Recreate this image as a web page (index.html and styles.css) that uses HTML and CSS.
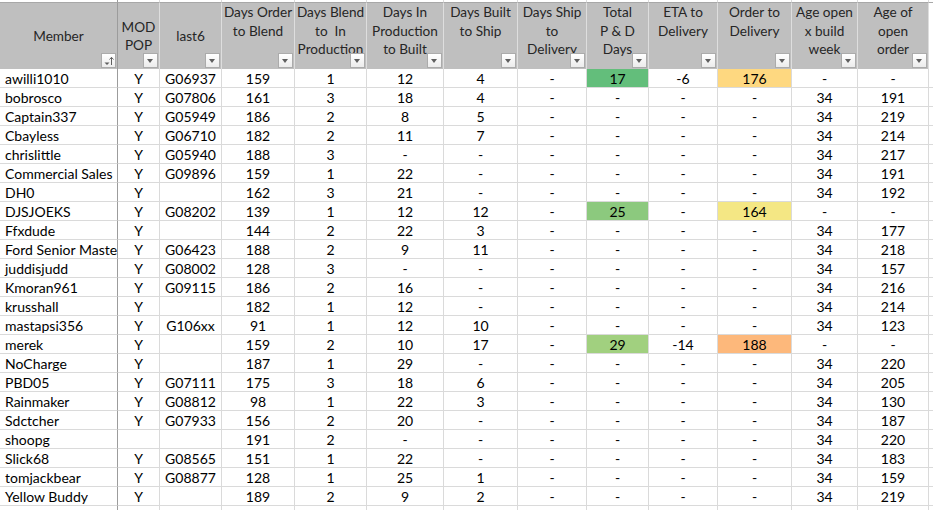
FILE: index.html
```html
<!DOCTYPE html>
<html>
<head>
<meta charset="utf-8">
<link rel="stylesheet" href="styles.css">
</head>
<body>
<div class="sheet">
  <div class="row top">
    <div class="c m"></div><div class="c"></div><div class="c"></div><div class="c"></div><div class="c"></div><div class="c"></div><div class="c"></div><div class="c"></div><div class="c"></div><div class="c"></div><div class="c"></div><div class="c"></div><div class="c"></div><div class="c x"></div>
  </div>
  <div class="row head">
    <div class="c m mid"><span>Member</span><span class="fb sort"><svg width="13" height="13" viewBox="0 0 13 13"><path d="M2.5 8.5h5l-2.5 2.5z" fill="#5f5f5f"/><path d="M9.5 11V3.5" stroke="#5f5f5f" stroke-width="1" fill="none"/><path d="M7.5 5.5l2-2.2 2 2.2" stroke="#5f5f5f" stroke-width="1" fill="none"/></svg></span></div>
    <div class="c mid"><span>MOD<br>POP</span><span class="fb"></span></div>
    <div class="c mid"><span>last6</span><span class="fb"></span></div>
    <div class="c"><span>Days Order<br>to Blend</span><span class="fb"></span></div>
    <div class="c"><span>Days Blend<br>to&nbsp; In<br>Production</span><span class="fb"></span></div>
    <div class="c"><span>Days In<br>Production<br>to Built</span><span class="fb"></span></div>
    <div class="c"><span>Days Built<br>to Ship</span><span class="fb"></span></div>
    <div class="c"><span>Days Ship<br>to<br>Delivery</span><span class="fb"></span></div>
    <div class="c"><span>Total<br>P &amp; D<br>Days</span><span class="fb"></span></div>
    <div class="c"><span>ETA to<br>Delivery</span><span class="fb"></span></div>
    <div class="c"><span>Order to<br>Delivery</span><span class="fb"></span></div>
    <div class="c"><span>Age open<br>x build<br>week</span><span class="fb"></span></div>
    <div class="c"><span>Age of<br>open<br>order</span><span class="fb"></span></div>
    <div class="c x"></div>
  </div>
  <div class="row"><div class="c m">awilli1010</div><div class="c">Y</div><div class="c">G06937</div><div class="c">159</div><div class="c">1</div><div class="c">12</div><div class="c">4</div><div class="c">-</div><div class="c g1">17</div><div class="c">-6</div><div class="c y1">176</div><div class="c">-</div><div class="c">-</div><div class="c x"></div></div>
  <div class="row"><div class="c m">bobrosco</div><div class="c">Y</div><div class="c">G07806</div><div class="c">161</div><div class="c">3</div><div class="c">18</div><div class="c">4</div><div class="c">-</div><div class="c">-</div><div class="c">-</div><div class="c">-</div><div class="c">34</div><div class="c">191</div><div class="c x"></div></div>
  <div class="row"><div class="c m">Captain337</div><div class="c">Y</div><div class="c">G05949</div><div class="c">186</div><div class="c">2</div><div class="c">8</div><div class="c">5</div><div class="c">-</div><div class="c">-</div><div class="c">-</div><div class="c">-</div><div class="c">34</div><div class="c">219</div><div class="c x"></div></div>
  <div class="row"><div class="c m">Cbayless</div><div class="c">Y</div><div class="c">G06710</div><div class="c">182</div><div class="c">2</div><div class="c">11</div><div class="c">7</div><div class="c">-</div><div class="c">-</div><div class="c">-</div><div class="c">-</div><div class="c">34</div><div class="c">214</div><div class="c x"></div></div>
  <div class="row"><div class="c m">chrislittle</div><div class="c">Y</div><div class="c">G05940</div><div class="c">188</div><div class="c">3</div><div class="c">-</div><div class="c">-</div><div class="c">-</div><div class="c">-</div><div class="c">-</div><div class="c">-</div><div class="c">34</div><div class="c">217</div><div class="c x"></div></div>
  <div class="row"><div class="c m">Commercial Sales</div><div class="c">Y</div><div class="c">G09896</div><div class="c">159</div><div class="c">1</div><div class="c">22</div><div class="c">-</div><div class="c">-</div><div class="c">-</div><div class="c">-</div><div class="c">-</div><div class="c">34</div><div class="c">191</div><div class="c x"></div></div>
  <div class="row"><div class="c m">DH0</div><div class="c">Y</div><div class="c"></div><div class="c">162</div><div class="c">3</div><div class="c">21</div><div class="c">-</div><div class="c">-</div><div class="c">-</div><div class="c">-</div><div class="c">-</div><div class="c">34</div><div class="c">192</div><div class="c x"></div></div>
  <div class="row"><div class="c m">DJSJOEKS</div><div class="c">Y</div><div class="c">G08202</div><div class="c">139</div><div class="c">1</div><div class="c">12</div><div class="c">12</div><div class="c">-</div><div class="c g2">25</div><div class="c">-</div><div class="c y2">164</div><div class="c">-</div><div class="c">-</div><div class="c x"></div></div>
  <div class="row"><div class="c m">Ffxdude</div><div class="c">Y</div><div class="c"></div><div class="c">144</div><div class="c">2</div><div class="c">22</div><div class="c">3</div><div class="c">-</div><div class="c">-</div><div class="c">-</div><div class="c">-</div><div class="c">34</div><div class="c">177</div><div class="c x"></div></div>
  <div class="row"><div class="c m">Ford Senior Master</div><div class="c">Y</div><div class="c">G06423</div><div class="c">188</div><div class="c">2</div><div class="c">9</div><div class="c">11</div><div class="c">-</div><div class="c">-</div><div class="c">-</div><div class="c">-</div><div class="c">34</div><div class="c">218</div><div class="c x"></div></div>
  <div class="row"><div class="c m">juddisjudd</div><div class="c">Y</div><div class="c">G08002</div><div class="c">128</div><div class="c">3</div><div class="c">-</div><div class="c">-</div><div class="c">-</div><div class="c">-</div><div class="c">-</div><div class="c">-</div><div class="c">34</div><div class="c">157</div><div class="c x"></div></div>
  <div class="row"><div class="c m">Kmoran961</div><div class="c">Y</div><div class="c">G09115</div><div class="c">186</div><div class="c">2</div><div class="c">16</div><div class="c">-</div><div class="c">-</div><div class="c">-</div><div class="c">-</div><div class="c">-</div><div class="c">34</div><div class="c">216</div><div class="c x"></div></div>
  <div class="row"><div class="c m">krusshall</div><div class="c">Y</div><div class="c"></div><div class="c">182</div><div class="c">1</div><div class="c">12</div><div class="c">-</div><div class="c">-</div><div class="c">-</div><div class="c">-</div><div class="c">-</div><div class="c">34</div><div class="c">214</div><div class="c x"></div></div>
  <div class="row"><div class="c m">mastapsi356</div><div class="c">Y</div><div class="c">G106xx</div><div class="c">91</div><div class="c">1</div><div class="c">12</div><div class="c">10</div><div class="c">-</div><div class="c">-</div><div class="c">-</div><div class="c">-</div><div class="c">34</div><div class="c">123</div><div class="c x"></div></div>
  <div class="row"><div class="c m">merek</div><div class="c">Y</div><div class="c"></div><div class="c">159</div><div class="c">2</div><div class="c">10</div><div class="c">17</div><div class="c">-</div><div class="c g3">29</div><div class="c">-14</div><div class="c o1">188</div><div class="c">-</div><div class="c">-</div><div class="c x"></div></div>
  <div class="row"><div class="c m">NoCharge</div><div class="c">Y</div><div class="c"></div><div class="c">187</div><div class="c">1</div><div class="c">29</div><div class="c">-</div><div class="c">-</div><div class="c">-</div><div class="c">-</div><div class="c">-</div><div class="c">34</div><div class="c">220</div><div class="c x"></div></div>
  <div class="row"><div class="c m">PBD05</div><div class="c">Y</div><div class="c">G07111</div><div class="c">175</div><div class="c">3</div><div class="c">18</div><div class="c">6</div><div class="c">-</div><div class="c">-</div><div class="c">-</div><div class="c">-</div><div class="c">34</div><div class="c">205</div><div class="c x"></div></div>
  <div class="row"><div class="c m">Rainmaker</div><div class="c">Y</div><div class="c">G08812</div><div class="c">98</div><div class="c">1</div><div class="c">22</div><div class="c">3</div><div class="c">-</div><div class="c">-</div><div class="c">-</div><div class="c">-</div><div class="c">34</div><div class="c">130</div><div class="c x"></div></div>
  <div class="row"><div class="c m">Sdctcher</div><div class="c">Y</div><div class="c">G07933</div><div class="c">156</div><div class="c">2</div><div class="c">20</div><div class="c">-</div><div class="c">-</div><div class="c">-</div><div class="c">-</div><div class="c">-</div><div class="c">34</div><div class="c">187</div><div class="c x"></div></div>
  <div class="row"><div class="c m">shoopg</div><div class="c"></div><div class="c"></div><div class="c">191</div><div class="c">2</div><div class="c">-</div><div class="c">-</div><div class="c">-</div><div class="c">-</div><div class="c">-</div><div class="c">-</div><div class="c">34</div><div class="c">220</div><div class="c x"></div></div>
  <div class="row"><div class="c m">Slick68</div><div class="c">Y</div><div class="c">G08565</div><div class="c">151</div><div class="c">1</div><div class="c">22</div><div class="c">-</div><div class="c">-</div><div class="c">-</div><div class="c">-</div><div class="c">-</div><div class="c">34</div><div class="c">183</div><div class="c x"></div></div>
  <div class="row"><div class="c m">tomjackbear</div><div class="c">Y</div><div class="c">G08877</div><div class="c">128</div><div class="c">1</div><div class="c">25</div><div class="c">1</div><div class="c">-</div><div class="c">-</div><div class="c">-</div><div class="c">-</div><div class="c">34</div><div class="c">159</div><div class="c x"></div></div>
  <div class="row"><div class="c m">Yellow Buddy</div><div class="c">Y</div><div class="c"></div><div class="c">189</div><div class="c">2</div><div class="c">9</div><div class="c">2</div><div class="c">-</div><div class="c">-</div><div class="c">-</div><div class="c">-</div><div class="c">34</div><div class="c">219</div><div class="c x"></div></div>
  <div class="row"><div class="c m"></div><div class="c"></div><div class="c"></div><div class="c"></div><div class="c"></div><div class="c"></div><div class="c"></div><div class="c"></div><div class="c"></div><div class="c"></div><div class="c"></div><div class="c"></div><div class="c"></div><div class="c x"></div></div>
</div>
</body>
</html>
```
FILE: styles.css
```css
html, body {
  margin: 0;
  padding: 0;
  background: #ffffff;
  overflow: hidden;
}
body {
  font-family: Lato, "Liberation Sans", sans-serif;
  font-size: 14px;
  color: #000000;
}
.sheet {
  width: 960px;
}
.row {
  display: grid;
  grid-template-columns: 118px 42px 62px 73px 72px 77px 74px 69px 62px 69px 74px 66px 71px 40px;
  height: 19px;
}
.c {
  box-sizing: border-box;
  border-right: 1px solid #dadada;
  border-bottom: 1px solid #dadada;
  text-align: center;
  line-height: 20px;
  white-space: nowrap;
  overflow: hidden;
}
.c.m {
  text-align: left;
  padding-left: 5px;
  border-right-color: #9c9c9c;
}
.top {
  height: 3px;
}
.top .c {
  border-bottom-color: #a8a8a8;
}
.head {
  height: 66px;
}
.head .c {
  position: relative;
  background: #bfbfbf;
  border-right-color: #dedede;
  border-bottom: none;
  white-space: normal;
  font-size: 13.6px;
  line-height: 18.5px;
  color: #262626;
  padding: 0;
}
.head .c.m {
  border-right-color: #9c9c9c;
}
.head .c.mid {
  display: flex;
  align-items: center;
  justify-content: center;
}
.head .c.x {
  background: #ffffff;
}
.fb {
  position: absolute;
  right: 1px;
  bottom: 1px;
  width: 15px;
  height: 15px;
  box-sizing: border-box;
  border: 1px solid #ababab;
  background: linear-gradient(#ffffff, #ececec);
}
.fb::after {
  content: "";
  position: absolute;
  left: 3px;
  top: 5px;
  border-left: 3.5px solid transparent;
  border-right: 3.5px solid transparent;
  border-top: 4px solid #5f5f5f;
}
.fb.sort::after {
  display: none;
}
.fb.sort svg {
  display: block;
  position: absolute;
  left: 0;
  top: 0;
}
.g1 { background: #63be7b; }
.g2 { background: #8cc97e; }
.g3 { background: #a1d07f; }
.y1 { background: #fed880; }
.y2 { background: #f4e784; }
.o1 { background: #fdb87b; }
```
